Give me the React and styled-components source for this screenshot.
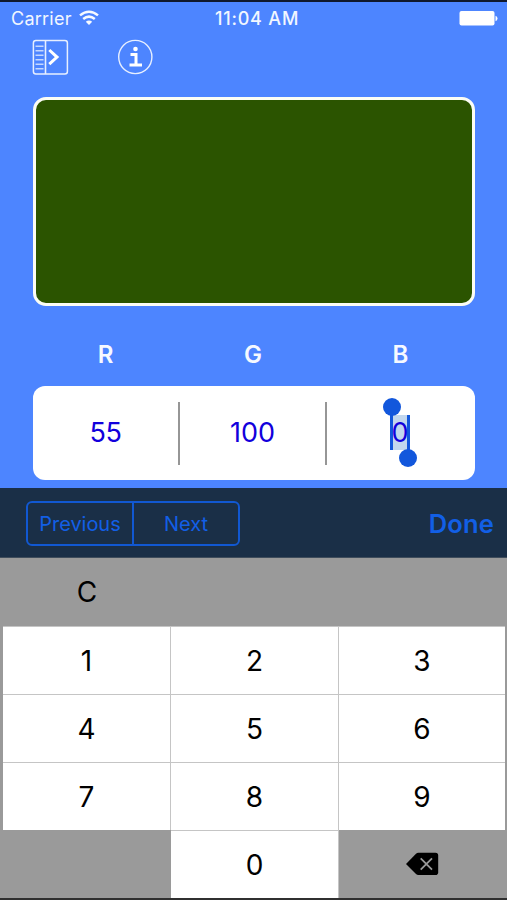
import React from "react";
import styled, { createGlobalStyle } from "styled-components";

const GlobalStyle = createGlobalStyle`
  * { box-sizing: border-box; }
  body { margin: 0; background: #4d85ff; font-family: Inter, "Liberation Sans", sans-serif; }
  button { font: inherit; border: 0; padding: 0; background: none; }
  svg { display: block; }
`;

const Screen = styled.div`
  width: 507px;
  height: 900px;
  display: flex;
  flex-direction: column;
  overflow: hidden;
  background: #4d85ff;
  border-top: 2px solid #10182c;
`;

const StatusBar = styled.header`
  height: 33px;
  display: grid;
  grid-template-columns: 1fr auto 1fr;
  align-items: center;
  padding: 0 9px 0 11px;
  color: #f2f7ff;
  font-size: 18px;
  line-height: 33px;
`;

const Carrier = styled.div`
  display: flex;
  align-items: center;
  gap: 7px;
  letter-spacing: 0.25px;
`;

const Time = styled.div`
  padding-left: 5px;
  font-size: 18px;
  font-weight: 500;
  letter-spacing: 0.8px;
`;

const BatterySlot = styled.div`
  display: flex;
  justify-content: flex-end;
`;

const ActionBar = styled.nav`
  height: 44px;
  display: flex;
  gap: 49px;
  padding: 4px 0 0 32px;
`;

const IconButton = styled.button`
  width: 37px;
  height: 37px;
`;

const Swatch = styled.div`
  height: 209px;
  margin: 18px 32px 0 33px;
  border: 3px solid #fbfdf5;
  border-radius: 13px;
  background: #2b5400;
`;

const Labels = styled.div`
  display: grid;
  grid-template-columns: repeat(3, 1fr);
  height: 80px;
  margin: 0 33px 0 32px;
  padding-top: 18px;
  align-items: center;
  text-align: center;
  color: #f6f9ff;
  font-size: 24px;
  font-weight: 600;
  line-height: 30px;
`;

const Values = styled.div`
  display: grid;
  grid-template-columns: 147px 147px 148px;
  align-items: center;
  height: 94px;
  margin: 0 32px 8px 33px;
  border-radius: 12px;
  background: #fff;
  color: #1200dc;
  font-size: 27px;
  text-align: center;
`;

const Value = styled.div`
  height: 63px;
  line-height: 61px;
  letter-spacing: ${(p) => p.$tracking || "0"};
  border-right: ${(p) => (p.$last ? "0" : "2px solid #969696")};
`;

const Selection = styled.span`
  position: relative;
  display: inline-block;
  width: 20px;
  height: 35px;
  margin-right: 2px;
  line-height: 35px;
  background: #c2d7ee;
  border: solid #1257dc;
  border-width: 0 3px;
  text-indent: -1.5px;
`;

const Handle = styled.i`
  position: absolute;
  width: 18px;
  height: 18px;
  border-radius: 50%;
  background: #1257dc;
  ${(p) => (p.$end ? "right: -10px; bottom: -17px;" : "left: -10px; top: -17px;")}
`;

const Accessory = styled.div`
  height: 70px;
  display: flex;
  align-items: center;
  justify-content: space-between;
  padding: 2px 13px 0 26px;
  background: #1a2f47;
  border-bottom: 1px solid #3f4d5c;
  color: #125fe6;
`;

const Segments = styled.div`
  display: flex;
  width: 214px;
  height: 45px;
  border: 2px solid #1158d2;
  border-radius: 6px;
`;

const Segment = styled.button`
  flex: 1 1 0;
  color: inherit;
  font-size: 20px;
  letter-spacing: ${(p) => p.$tracking};
  & + & { border-left: 2px solid #1158d2; }
`;

const Done = styled.button`
  color: inherit;
  font-size: 25.5px;
  font-weight: 600;
  letter-spacing: 0.15px;
`;

const Keypad = styled.div`
  height: 342px;
  display: grid;
  grid-template-columns: 171px 168px 168px;
  grid-template-rows: repeat(5, 68px);
  background: #9a9a9a;
  border-bottom: 2px solid #303030;
`;

const Key = styled.button`
  display: flex;
  align-items: center;
  justify-content: center;
  margin-left: ${(p) => (p.$first ? "3px" : "0")};
  margin-right: ${(p) => (p.$last ? "2px" : "0")};
  color: #000;
  background: ${(p) => (p.$plain ? "transparent" : "#fff")};
  border-style: solid;
  border-color: #c5c5c5;
  border-width: ${(p) => (p.$plain ? "0" : p.$last ? "1px 0 0 0" : "1px 1px 0 0")};
  font-size: 28px;
  line-height: 34px;
`;

const DeleteKey = styled(Key)`
  padding-right: 3px;
`;

const WifiIcon = () => (
  <svg width="20" height="17" viewBox="0 0 20 17" fill="none" stroke="#f6faff" strokeWidth="2.5">
    <path d="M1 5.4Q10-2 19 5.4M4.2 9Q10 4.2 15.8 9" />
    <path d="M6.8 11.8Q10 9.2 13.2 11.8L10 15Z" fill="#f6faff" stroke="none" />
  </svg>
);

const BatteryIcon = () => (
  <svg width="39" height="16" viewBox="0 0 39 16" fill="#fff">
    <rect x="0.5" y="0" width="35" height="14.5" rx="2" />
    <path d="M36.5 4.7Q38.5 5.5 38.5 7.5T36.5 10.3Z" />
  </svg>
);

const PanelIcon = () => (
  <svg width="37" height="37" viewBox="0 0 37 37" fill="none" stroke="#e7efff">
    <rect x="1.4" y="1.4" width="34" height="33.6" rx="2.5" strokeWidth="1.5" />
    <path d="M13.5 1.5V35" strokeWidth="1.6" />
    <path d="M3.5 7.2H11.5M3.5 11.7H11.5M3.5 16.2H11.5M3.5 20.7H11.5M3.5 25.2H11.5M3.5 29.7H11.5" stroke="#c5d8ff" strokeWidth="1.4" />
    <path d="M17.3 11L25 18.1L17.3 25.2" stroke="#fff" strokeWidth="3" />
  </svg>
);

const InfoIcon = () => (
  <svg width="37" height="37" viewBox="0 0 37 37" fill="none" stroke="#e7efff">
    <circle cx="17.3" cy="18" r="16.6" strokeWidth="1.4" />
    <circle cx="17.5" cy="10" r="2.3" fill="#fff" stroke="none" />
    <path d="M12.5 15.5H18V25.5M11.5 26H24" stroke="#fff" strokeWidth="3" />
  </svg>
);

const DeleteIcon = () => (
  <svg width="34" height="24" viewBox="0 0 34 24">
    <path d="M1 12L11 1.7Q12 .8 13.4.8H30.5Q33.2.8 33.2 3.5V20.2Q33.2 23 30.5 23H13.4Q12 23 11 22.1Z" fill="#000" />
    <path d="M15.7 6.3L27 17.6M27 6.3L15.7 17.6" stroke="#999" strokeWidth="1.8" />
  </svg>
);

const rows = [["1", "2", "3"], ["4", "5", "6"], ["7", "8", "9"]];

export default function App() {
  return (
    <>
      <GlobalStyle />
      <Screen>
        <StatusBar>
          <Carrier>Carrier <WifiIcon /></Carrier>
          <Time>11:04 AM</Time>
          <BatterySlot><BatteryIcon /></BatterySlot>
        </StatusBar>
        <ActionBar>
          <IconButton aria-label="Open panel"><PanelIcon /></IconButton>
          <IconButton aria-label="Information"><InfoIcon /></IconButton>
        </ActionBar>
        <Swatch />
        <Labels><span>R</span><span>G</span><span>B</span></Labels>
        <Values>
          <Value $tracking="-0.4px">55</Value>
          <Value>100</Value>
          <Value $last>
            <Selection><Handle />0<Handle $end /></Selection>
          </Value>
        </Values>
        <Accessory>
          <Segments>
            <Segment $tracking="-0.05px">Previous</Segment>
            <Segment $tracking="0">Next</Segment>
          </Segments>
          <Done>Done</Done>
        </Accessory>
        <Keypad>
          <Key $plain $first>C</Key>
          <Key $plain disabled />
          <Key $plain disabled />
          {rows.flatMap((row) =>
            row.map((digit, i) => (
              <Key key={digit} $first={i === 0} $last={i === 2}>{digit}</Key>
            ))
          )}
          <Key $plain disabled />
          <Key>0</Key>
          <DeleteKey $plain aria-label="Delete"><DeleteIcon /></DeleteKey>
        </Keypad>
      </Screen>
    </>
  );
}
